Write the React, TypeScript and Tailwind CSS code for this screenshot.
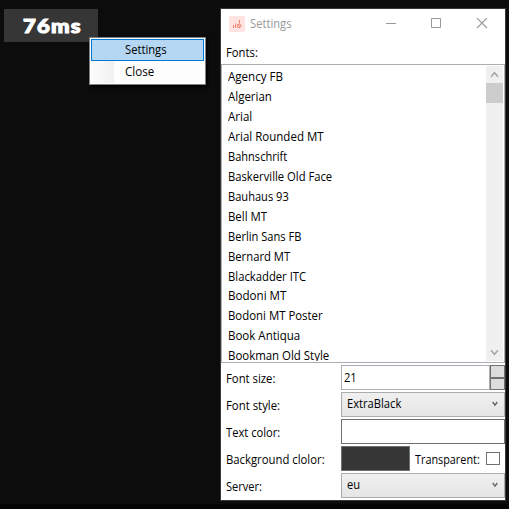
import React, { useLayoutEffect, useRef } from "react";

type FitProps = { children: string; width: number; className?: string };

/** A single-line label whose glyphs are condensed to a fixed advance width. */
function Fit({ children, width, className = "" }: FitProps) {
  const ref = useRef<HTMLSpanElement>(null);
  useLayoutEffect(() => {
    const el = ref.current;
    if (el) el.style.transform = `scaleX(${width / el.offsetWidth})`;
  }, [width, children]);
  return (
    <span className="block shrink-0 overflow-visible whitespace-nowrap" style={{ width }}>
      <span ref={ref} className={`inline-block origin-left whitespace-nowrap ${className}`}>
        {children}
      </span>
    </span>
  );
}

const fonts: [string, number][] = [
  ["Agency FB", 55],
  ["Algerian", 44],
  ["Arial", 24],
  ["Arial Rounded MT", 96],
  ["Bahnschrift", 59],
  ["Baskerville Old Face", 104],
  ["Bauhaus 93", 61],
  ["Bell MT", 39],
  ["Berlin Sans FB", 73],
  ["Bernard MT", 62],
  ["Blackadder ITC", 78],
  ["Bodoni MT", 58],
  ["Bodoni MT Poster", 95],
  ["Book Antiqua", 72],
  ["Bookman Old Style", 101],
];

function Chevron({ className }: { className?: string }) {
  return (
    <svg width="9" height="7" viewBox="0 0 9 7" fill="none" stroke="currentColor" strokeWidth="1.6" className={className}>
      <path d="M1 1.200 4.500 5.200 8 1.200" />
    </svg>
  );
}

function Combo({ text, width }: { text: string; width: number }) {
  return (
    <div className="flex h-[25px] w-[164px] items-center justify-between border border-[#acacac] bg-linear-to-b from-[#f0f0f0] to-[#e5e5e5] pl-[5px] pr-[6px]">
      <div className="-mt-[2px]">
        <Fit width={width}>{text}</Fit>
      </div>
      <svg width="6" height="6" viewBox="0 0 6 6" fill="none" stroke="#606060" strokeWidth="1.3" className="-mt-px">
        <path d="M.7 1 3 4.200 5.300 1" />
      </svg>
    </div>
  );
}

function Row({ label, width, children }: { label: string; width: number; children: React.ReactNode }) {
  return (
    <div className="flex h-[27px] items-start">
      <div className="w-[120px] pl-[5px] pt-[6px]">
        <Fit width={width}>{label}</Fit>
      </div>
      {children}
    </div>
  );
}

export default function App() {
  return (
    <div className="relative h-[509px] w-[509px] overflow-hidden border-b-[5px] border-[#060405] bg-[#0c0c0c] font-['Open_Sans','Noto_Sans',sans-serif] text-[12px] leading-4 text-black">
      <div className="absolute left-[4px] top-[9px] flex h-[33px] w-[94px] items-center bg-[#363636] pl-[19px] text-white">
        <Fit width={58} className="font-['Lato'] text-[19px] font-black leading-[31px] tracking-[1px] [-webkit-text-stroke:1.1px_white]">
          76ms
        </Fit>
      </div>

      <div className="absolute left-[89px] top-[37px] flex h-[48px] w-[117px] flex-col border border-[#808080] bg-[#fdfdfd] p-px shadow-[2px_2px_3px_#000]">
        <div className="flex h-[22px] items-center border border-[#0078d7] bg-[#b5d7f3] pl-[33px]">
          <Fit width={42}>Settings</Fit>
        </div>
        <div className="flex h-[22px] items-center">
          <div className="mr-[11px] h-full w-[23px] bg-linear-to-r from-[#fcfcfc] to-[#f0f0f0]" />
          <Fit width={29}>Close</Fit>
        </div>
      </div>

      <div className="absolute left-[220px] top-[8px] flex h-[493px] w-[286px] flex-col border border-[#383838] bg-white">
        <div className="flex h-[30px] items-center pl-[8px] text-[#999]">
          <div className="mr-[5px] flex size-4 items-center justify-center rounded-[2px] bg-[#ffe3e0]">
            <svg width="10" height="10" viewBox="0 0 10 10" fill="none" stroke="#f4806f" strokeWidth="1">
              <path d="M1.500 6v3M3.500 4.500V9M7.500 1v3" />
              <circle cx="7" cy="6.800" r="1.800" />
              <path d="m5.800 5.600 2.400 2.400" />
            </svg>
          </div>
          <Fit width={42}>Settings</Fit>
          <svg width="104" height="12" viewBox="0 0 104 12" fill="none" stroke="#999" className="ml-[94px]">
            <path d="M0 5.500h10M45.500.5h9v9h-9z" />
            <path d="M91 0l10 10M101 0l-10 10" strokeWidth="1.100" />
          </svg>
        </div>
        <div className="h-[25px] pl-[5px] pt-[6px]">
          <Fit width={32}>Fonts:</Fit>
        </div>
        <div className="flex h-[299px] shrink-0 overflow-hidden border border-[#abadb3] p-px">
          <div className="h-[295px] flex-1 overflow-hidden pl-[5px] pt-[1px]">
            {fonts.map(([name, width]) => (
              <div key={name} className="flex h-[19.960px] items-center">
                <Fit width={width}>{name}</Fit>
              </div>
            ))}
          </div>
          <div className="flex h-[295px] w-[17px] flex-col items-center bg-[#f0f0f0] text-[#a6a6a6]">
            <div className="flex h-[17px] items-center">
              <Chevron className="rotate-180" />
            </div>
            <div className="h-[20px] w-full bg-[#cdcdcd]" />
            <div className="mt-auto flex h-[17px] items-center">
              <Chevron />
            </div>
          </div>
        </div>
        <div className="mt-[2px] flex flex-col">
          <Row label="Font size:" width={49}>
            <div className="flex h-[25px] w-[149px] items-center border border-[#abadb3] pl-[2px]">
              <Fit width={13}>21</Fit>
            </div>
            <div className="flex h-[25px] w-[15px] flex-col">
              <div className="h-[13px] border border-[#707070] bg-[#ddd]" />
              <div className="h-[12px] border border-[#707070] bg-[#ddd]" />
            </div>
          </Row>
          <Row label="Font style:" width={54}>
            <Combo text="ExtraBlack" width={54} />
          </Row>
          <Row label="Text color:" width={54}>
            <div className="h-[25px] w-[164px] border border-[#707070] bg-white" />
          </Row>
          <Row label="Background clolor:" width={99}>
            <div className="h-[25px] w-[69px] border border-[#707070] bg-[#363636]" />
            <div className="flex h-[25px] items-center pl-[5px]">
              <div className="pt-[2px]">
                <Fit width={65}>Transparent:</Fit>
              </div>
              <div className="ml-[6px] h-[13px] w-[14px] border border-[#707070] bg-white" />
            </div>
          </Row>
          <Row label="Server:" width={36}>
            <Combo text="eu" width={13} />
          </Row>
        </div>
      </div>
    </div>
  );
}
